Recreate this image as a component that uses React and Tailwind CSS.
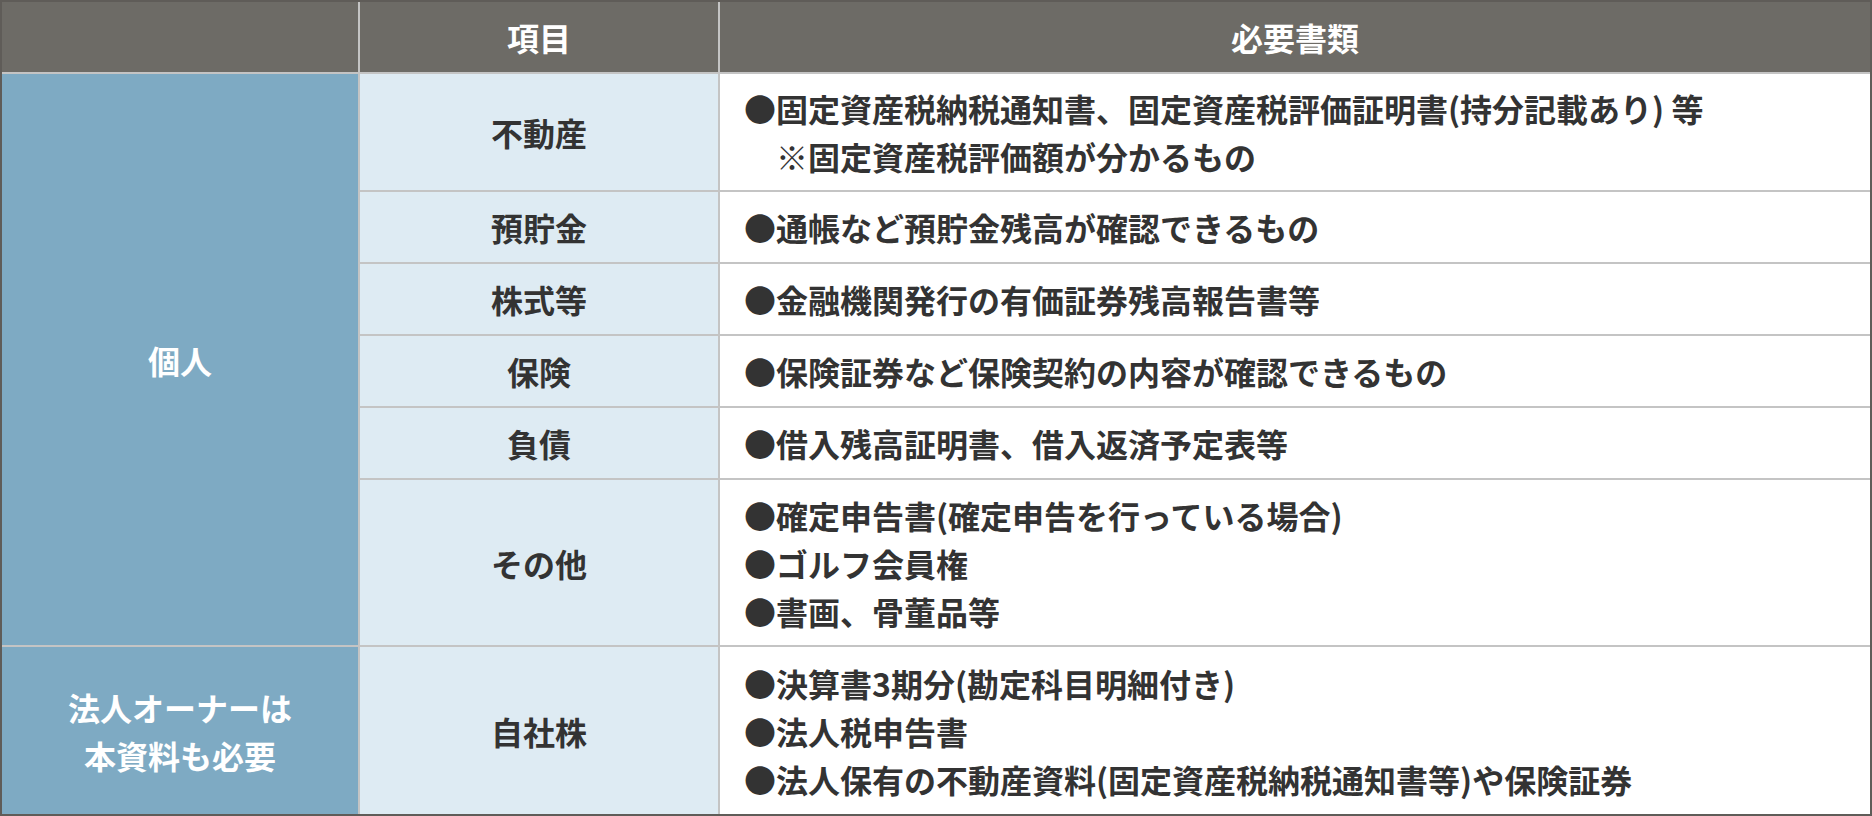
import React from "react";

const rows = [
  { item: "不動産", lines: ["●固定資産税納税通知書、固定資産税評価証明書(持分記載あり) 等", "　※固定資産税評価額が分かるもの"] },
  { item: "預貯金", lines: ["●通帳など預貯金残高が確認できるもの"] },
  { item: "株式等", lines: ["●金融機関発行の有価証券残高報告書等"] },
  { item: "保険", lines: ["●保険証券など保険契約の内容が確認できるもの"] },
  { item: "負債", lines: ["●借入残高証明書、借入返済予定表等"] },
  { item: "その他", lines: ["●確定申告書(確定申告を行っている場合)", "●ゴルフ会員権", "●書画、骨董品等"] },
];

export default function App() {
  return (
    <div
      className="w-[1872px] h-[816px] bg-white"
      style={{ fontFamily: '"Noto Sans CJK JP", "Noto Sans", sans-serif' }}
    >
      <div className="grid h-full w-full grid-cols-[356px_358px_1fr] grid-rows-[70px_116px_70px_70px_70px_70px_165px_167px] gap-[2px] border-2 border-[#5f5c58] bg-[#c4c4c4] text-[32px] leading-[48px] font-bold">
        <div className="bg-[#6d6b66]" />
        <div className="flex items-center justify-center bg-[#6d6b66] text-white">項目</div>
        <div className="flex items-center justify-center bg-[#6d6b66] text-white">必要書類</div>

        <div className="row-span-6 flex items-center justify-center bg-[#7eaac3] text-white">個人</div>
        {rows.map((r) => (
          <React.Fragment key={r.item}>
            <div className="flex items-center justify-center bg-[#deebf3] text-[#333333]">{r.item}</div>
            <div className="flex flex-col justify-center bg-white pl-[24px] text-[#333333]">
              {r.lines.map((l) => (
                <div key={l} className="whitespace-pre">{l}</div>
              ))}
            </div>
          </React.Fragment>
        ))}

        <div className="flex flex-col items-center justify-center bg-[#7eaac3] text-center text-white">
          <div>法人オーナーは</div>
          <div>本資料も必要</div>
        </div>
        <div className="flex items-center justify-center bg-[#deebf3] text-[#333333]">自社株</div>
        <div className="flex flex-col justify-center bg-white pl-[24px] text-[#333333]">
          <div>●決算書3期分(勘定科目明細付き)</div>
          <div>●法人税申告書</div>
          <div>●法人保有の不動産資料(固定資産税納税通知書等)や保険証券</div>
        </div>
      </div>
    </div>
  );
}
